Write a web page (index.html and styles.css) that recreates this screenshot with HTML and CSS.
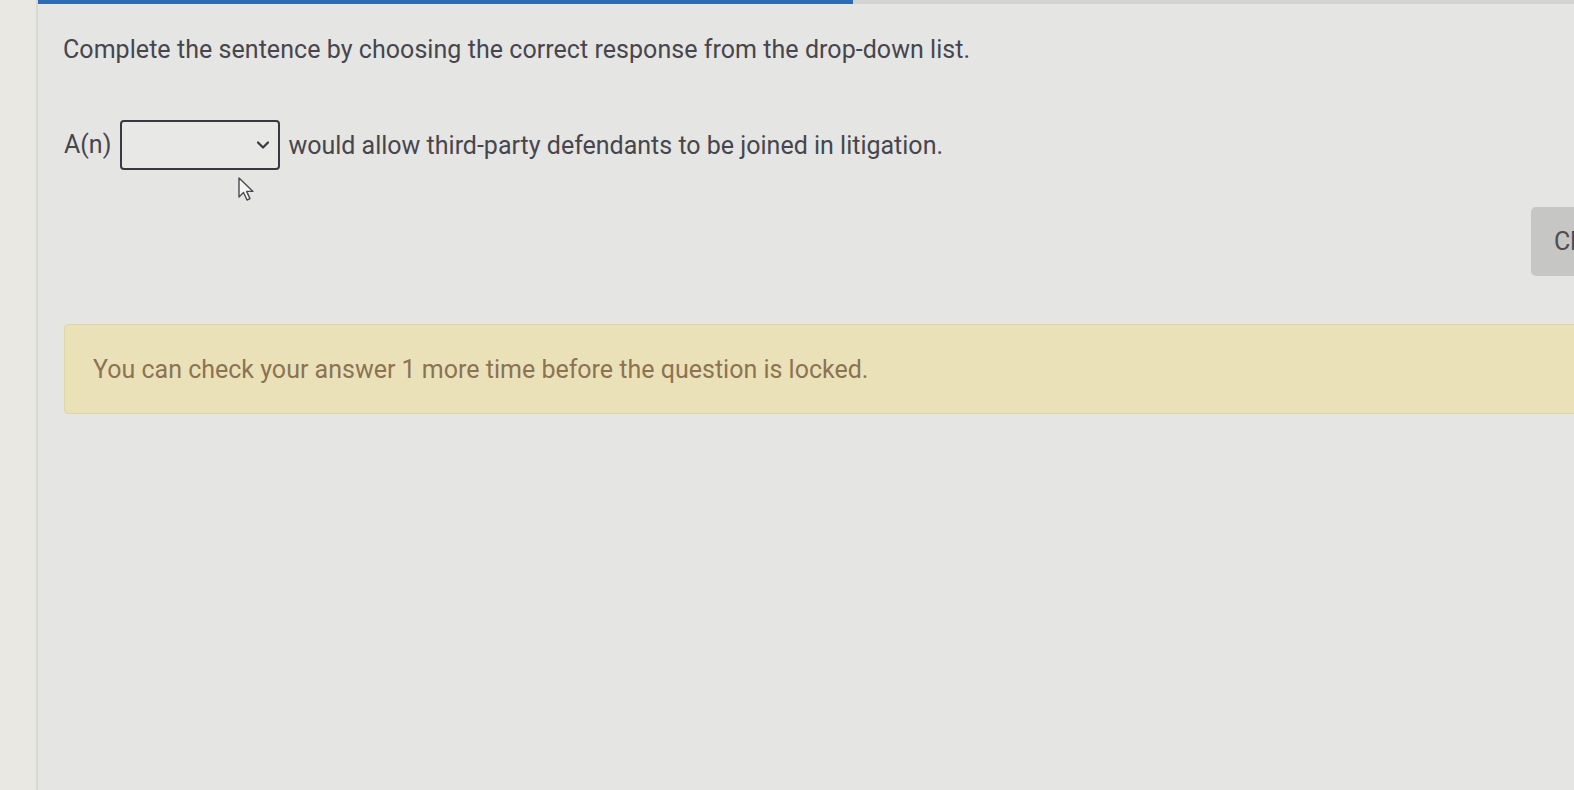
FILE: index.html
```html
<!DOCTYPE html>
<html lang="en">
<head>
<meta charset="utf-8">
<title>Question</title>
<link rel="stylesheet" href="styles.css">
</head>
<body>
<div class="page">
  <aside class="rail"></aside>
  <main class="main">
    <div class="topbar"><div class="progress"></div></div>
    <section class="content">
      <p class="prompt">Complete the sentence by choosing the correct response from the drop-down list.</p>
      <div class="sentence">
        <span class="lead">A(n)</span>
        <div class="select">
          <svg class="chev" width="14" height="10" viewBox="0 0 14 10"><path d="M2 2.5 L7 7.5 L12 2.5" fill="none" stroke="#3a3940" stroke-width="2.2" stroke-linecap="round" stroke-linejoin="round"/></svg>
        </div>
        <span class="rest">would allow third-party defendants to be joined in litigation.</span>
        <svg class="cursor" width="22" height="28" viewBox="0 0 22 28"><path d="M2 2 L2 21 L6.5 16.5 L10 24 L13 22.6 L9.6 15.4 L16 15.4 Z" fill="#f4f4f2" stroke="#4a4a50" stroke-width="1.4" stroke-linejoin="round"/></svg>
      </div>
      <div class="actions"><button class="check">Check</button></div>
      <div class="notice">You can check your answer 1 more time before the question is locked.</div>
    </section>
  </main>
</div>
</body>
</html>
```
FILE: styles.css
```css
html, body {
  margin: 0;
  padding: 0;
  overflow: hidden;
}
body {
  width: 1574px;
  height: 790px;
  background: #e5e5e3;
  font-family: Roboto, "Noto Sans", "Liberation Sans", sans-serif;
  color: #47454d;
}
.page {
  display: flex;
  height: 790px;
}
.rail {
  width: 36px;
  flex: none;
  background: #e9e8e2;
  border-right: 2px solid #d9d8d3;
}
.main {
  flex: 1;
  display: flex;
  flex-direction: column;
  min-width: 0;
}
.topbar {
  height: 4px;
  background: #d3d3d1;
  display: flex;
}
.progress {
  width: 815px;
  background: #2e6bb4;
}
.content {
  padding-left: 25px;
  display: flex;
  flex-direction: column;
}
.prompt {
  margin: 31px 0 0 0;
  font-size: 25px;
  line-height: 30px;
  letter-spacing: 0.05px;
}
.sentence {
  position: relative;
  display: flex;
  align-items: center;
  margin-top: 55px;
  font-size: 25px;
  line-height: 30px;
}
.lead {
  margin-left: 1px;
  margin-right: 9px;
}
.select {
  width: 148px;
  height: 46px;
  border: 2px solid #3a3940;
  border-radius: 4px;
  background: #e8e8e6;
  display: flex;
  align-items: center;
  justify-content: flex-end;
  padding-right: 8px;
  box-sizing: content-box;
  margin-right: 8px;
}
.rest {
  position: relative;
  top: 1px;
}
.cursor {
  position: absolute;
  left: 174px;
  top: 56px;
}
.actions {
  display: flex;
  justify-content: flex-end;
  margin-top: 37px;
  margin-right: -73px;
}
.check {
  width: 116px;
  height: 69px;
  border: none;
  border-radius: 5px;
  background: #c6c6c4;
  color: #4e4e52;
  font-family: inherit;
  font-size: 25px;
  text-align: left;
  padding: 0 0 0 23px;
}
.notice {
  margin-top: 48px;
  margin-left: 1px;
  margin-right: -40px;
  height: 90px;
  box-sizing: border-box;
  background: #ebe1b9;
  border: 1px solid #e1d5a8;
  border-radius: 4px;
  color: #8c7352;
  font-size: 25px;
  display: flex;
  align-items: center;
  padding-left: 28px;
}
```
